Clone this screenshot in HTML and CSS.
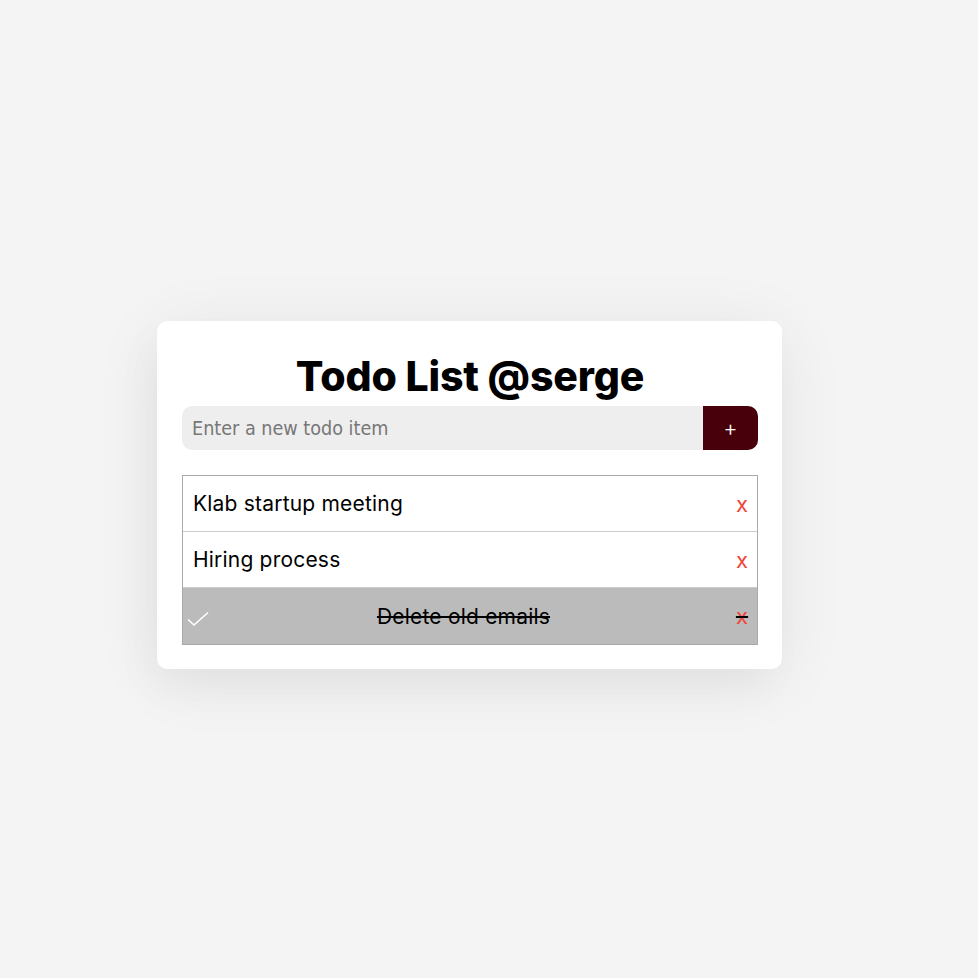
FILE: index.html
```html
<!DOCTYPE html>
<html>
<head>
<meta charset="utf-8">
<link rel="stylesheet" href="styles.css">
</head>
<body>
<div class="page">
  <div class="card">
    <h1 class="title">Todo List @serge</h1>
    <div class="add-row">
      <input class="add-input" type="text" placeholder="Enter a new todo item">
      <button class="add-btn">+</button>
    </div>
    <ul class="list">
      <li class="item"><span class="item-text">Klab startup meeting</span><span class="del">x</span></li>
      <li class="item"><span class="item-text">Hiring process</span><span class="del">x</span></li>
      <li class="item done">
        <svg class="check" width="22" height="16" viewBox="0 0 22 16"><path d="M1 8.5 L7 14 L21 1.5" fill="none" stroke="#fff" stroke-width="1.6"/></svg>
        <span class="item-text">Delete old emails</span><span class="del">x</span>
      </li>
    </ul>
  </div>
</div>
</body>
</html>
```
FILE: styles.css
```css
html, body {
  margin: 0;
  padding: 0;
  background: #f4f4f4;
  font-family: "Inter", "Open Sans", sans-serif;
}
.page {
  width: 978px;
  height: 978px;
  display: flex;
  align-items: flex-start;
  justify-content: flex-start;
  padding: 321px 0 0 157px;
  box-sizing: border-box;
}
.card {
  width: 625px;
  box-sizing: border-box;
  background: #fff;
  border-radius: 10px;
  padding: 25px 24px 24px 25px;
  box-shadow: 0 10px 70px rgba(0, 0, 0, 0.07), -10px 20px 40px rgba(0,0,0,0.03);
}
.title {
  margin: 0;
  height: 60px;
  line-height: 60px;
  text-align: center;
  font-size: 41px;
  font-weight: 800;
  color: #000;
  letter-spacing: -0.15px;
}
.add-row {
  display: flex;
  height: 44px;
}
.add-input {
  flex: 1;
  min-width: 0;
  border: none;
  outline: none;
  background: #eeeeee;
  border-radius: 10px 0 0 10px;
  padding: 0 10px;
  font-family: "DejaVu Sans Condensed", "DejaVu Sans", sans-serif;
  font-size: 19.6px;
  color: #333;
}
.add-input::placeholder {
  color: #777;
}
.add-btn {
  width: 55px;
  border: none;
  background: #48000a;
  color: #fff;
  border-radius: 0 10px 10px 0;
  font-family: "Inter", sans-serif;
  font-size: 22px;
  font-weight: 300;
  padding: 0;
}
.list {
  list-style: none;
  margin: 25px 0 0;
  padding: 0;
  border: 1px solid #aaa;
}
.item {
  position: relative;
  display: flex;
  align-items: center;
  height: 55px;
  padding: 0 7px 0 10px;
  border-bottom: 1px solid #ccc;
  font-size: 21px;
  letter-spacing: 0.2px;
  color: #000;
}
.item:last-child {
  border-bottom: none;
  height: 56px;
}
.item-text {
  flex: 1;
}
.del {
  color: #f44336;
  font-size: 22px;
  width: 16px;
  text-align: center;
}
.done {
  background: #bbbbbb;
}
.done .item-text {
  text-align: center;
  text-decoration: line-through;
}
.done .del {
  text-decoration: line-through;
  text-decoration-color: #000;
}
.check {
  position: absolute;
  left: 4px;
  top: 23px;
}
```
